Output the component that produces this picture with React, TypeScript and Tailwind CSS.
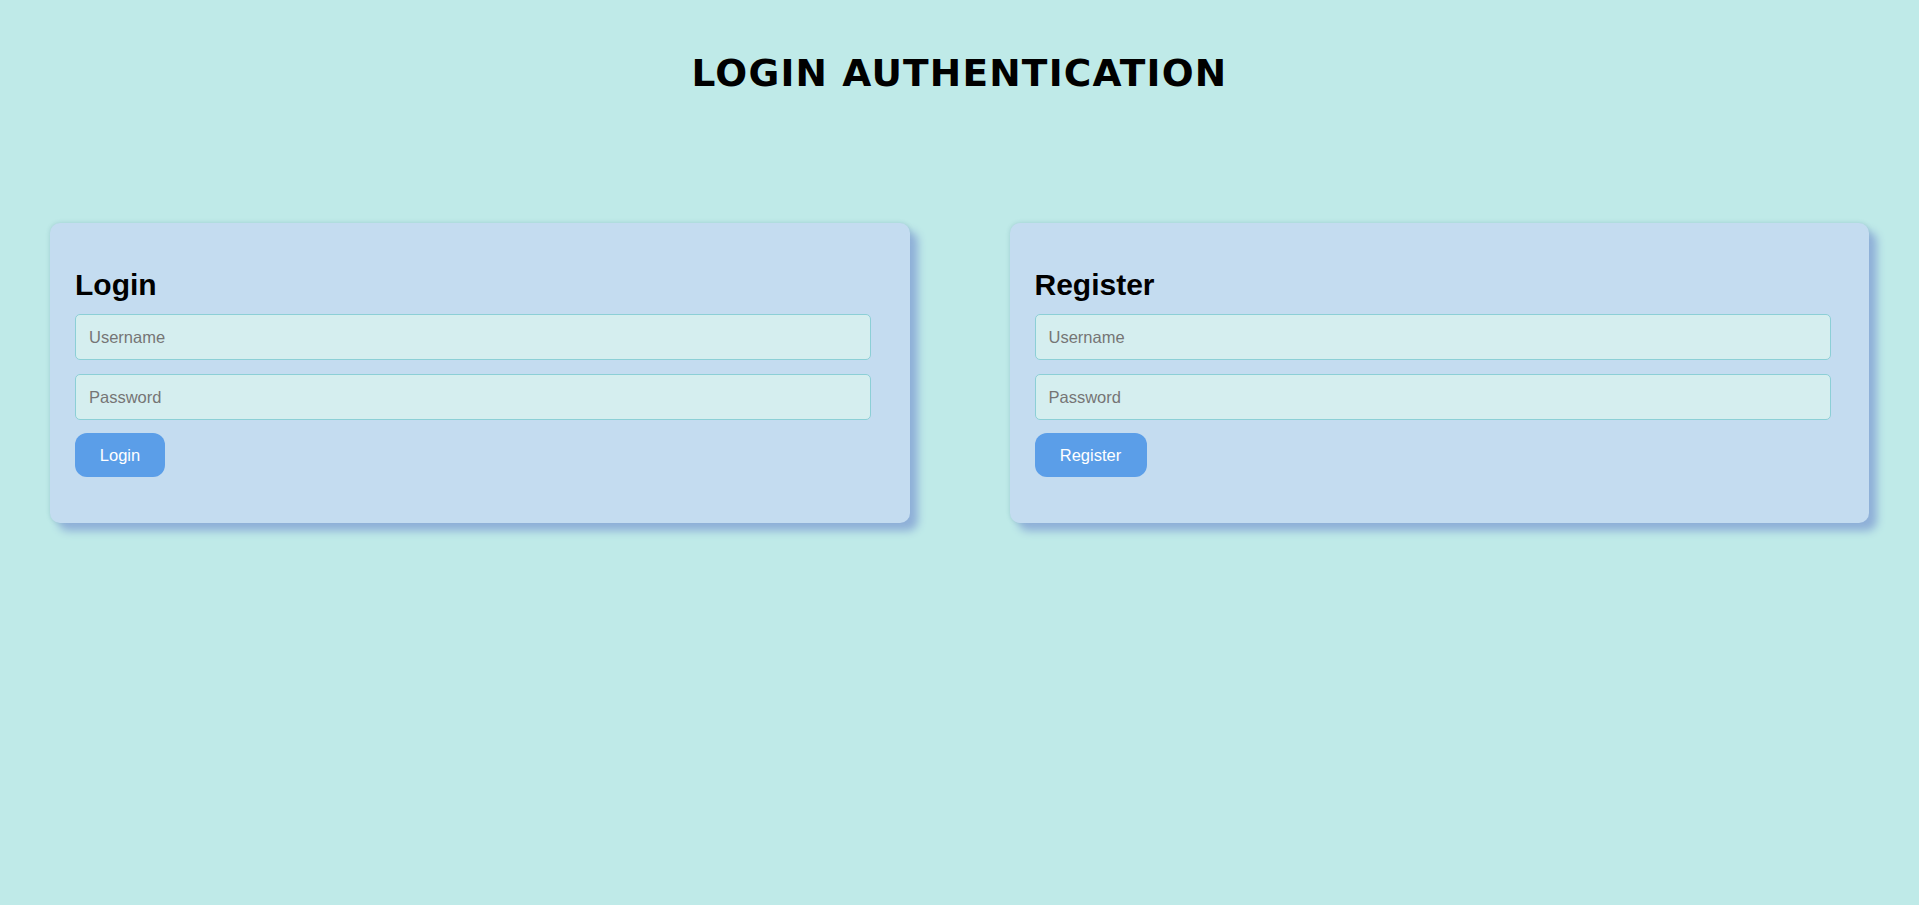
import React from "react";

function Card({ title, button, btnW }: { title: string; button: string; btnW: string }) {
  return (
    <div className="bg-[#c4dcf0] rounded-[10px] pt-[45px] pb-[45px] pl-[25px] shadow-[8px_8px_8px_#8fb0d8,0_0_4px_rgba(60,120,140,0.25)] h-[300px]">
      <h2 className="text-[30px] leading-[34px] font-bold text-black font-['Liberation_Sans',Arial,sans-serif]">{title}</h2>
      <div className="mt-[12px] flex flex-col gap-[14px]">
        <input
          placeholder="Username"
          className="w-[796px] h-[46px] rounded-[5px] border border-[#8ccfd6] bg-[#d5eeef] px-[13px] text-[16.5px] text-black placeholder:text-[#757575] outline-none font-['Liberation_Sans',Arial,sans-serif]"
        />
        <input
          placeholder="Password"
          type="password"
          className="w-[796px] h-[46px] rounded-[5px] border border-[#8ccfd6] bg-[#d5eeef] px-[13px] text-[16.5px] text-black placeholder:text-[#757575] outline-none font-['Liberation_Sans',Arial,sans-serif]"
        />
      </div>
      <button
        className={`mt-[13px] h-[44px] ${btnW} rounded-[12px] bg-[#5b9ee8] text-white text-[16.5px] font-['Liberation_Sans',Arial,sans-serif]`}
      >
        {button}
      </button>
    </div>
  );
}

export default function App() {
  return (
    <div className="min-h-[905px] w-full bg-[#bfeae8]">
      <h1 className="pt-[51px] text-center text-[37.5px] leading-[44px] tracking-[1.2px] font-bold text-black font-['DejaVu_Sans',Verdana,sans-serif]">
        LOGIN AUTHENTICATION
      </h1>
      <div className="mt-[128px] grid grid-cols-2 gap-[100px] px-[50px]">
        <Card title="Login" button="Login" btnW="w-[90px]" />
        <Card title="Register" button="Register" btnW="w-[112px]" />
      </div>
    </div>
  );
}
